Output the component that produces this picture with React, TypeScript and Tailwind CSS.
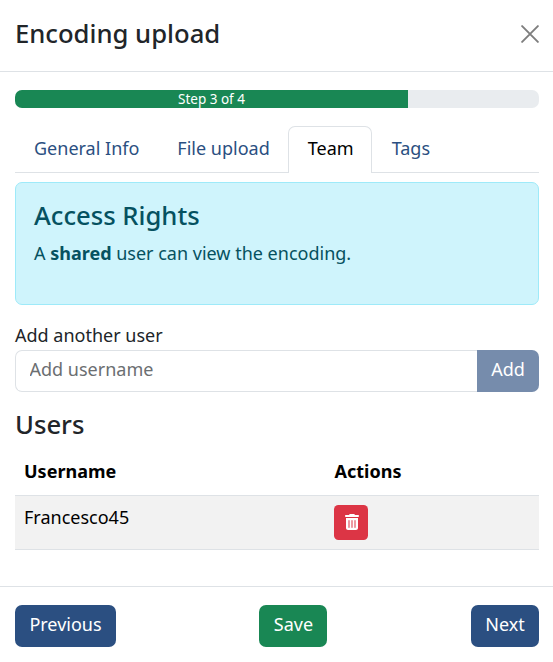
import React from "react";
import { FaTrashCan } from "react-icons/fa6";

const tabs = ["General Info", "File upload", "Team", "Tags"];

function Tab({ label, active }: { label: string; active: boolean }) {
  return (
    <button
      className={
        active
          ? "mr-px -mb-px -ml-px h-[47px] w-[84px] rounded-t-[7px] border border-b-0 border-[#dee2e6] bg-white pb-[3px] pl-[2px] text-black"
          : "h-[46px] px-[19px] pb-[2px] text-[#2b4f81]"
      }
    >
      {label}
    </button>
  );
}

export default function App() {
  return (
    <div className="h-[662px] w-[553px] overflow-hidden bg-white font-['Noto_Sans',sans-serif] text-[18px] leading-[27px] text-[#212529]">
      <header className="flex h-[72px] items-center justify-between border-b border-[#dee2e6] pr-[14px] pb-[3px] pl-[15px]">
        <h1 className="text-[25.65px] leading-[38px] font-medium">Encoding upload</h1>
        <button aria-label="Close" className="text-black opacity-50">
          <svg width="18" height="18" viewBox="0 0 16 16" fill="none" stroke="currentColor" strokeWidth="1.7" strokeLinecap="round">
            <path d="M1 1l14 14M15 1L1 15" />
          </svg>
        </button>
      </header>

      <main className="h-[515px] border-b border-[#dee2e6] pt-[18px] pr-[14px] pl-[15px]">
        <div className="flex h-[18px] overflow-hidden rounded-[7px] bg-[#e9ecef] text-[13.5px] leading-[18px]">
          <div className="w-3/4 bg-[#198754] text-center text-white">Step 3 of 4</div>
        </div>

        <nav className="mt-[18px] flex h-[47px] border-b border-[#dee2e6]">
          {tabs.map((label) => (
            <Tab key={label} label={label} active={label === "Team"} />
          ))}
        </nav>

        <section className="mt-[9px] h-[123px] rounded-[7px] border border-[#9eeaf9] bg-[#cff4fc] px-[18px] pt-[18px] text-[#055160]">
          <h2 className="text-[25.65px] leading-[30px] font-medium">Access Rights</h2>
          <p className="mt-[9px]">
            A <strong className="font-bold">shared</strong> user can view the encoding.
          </p>
        </section>

        <label htmlFor="username" className="mt-[17px] mb-px block">
          Add another user
        </label>
        <div className="flex h-[42px]">
          <input
            id="username"
            placeholder="Add username"
            className="min-w-0 flex-1 rounded-l-[7px] border border-r-0 border-[#dee2e6] px-[13.5px] pb-[4px] placeholder:text-[#6b6e71]"
          />
          <button className="w-[62px] rounded-r-[7px] bg-[#768cac] pb-[4px] text-white">Add</button>
        </div>

        <h2 className="mt-[18px] text-[25.65px] leading-[30px] font-medium">Users</h2>
        <table className="mt-[9px] w-full table-fixed border-collapse text-left text-black">
          <thead>
            <tr className="h-[46px] border-b border-[#dee2e6]">
              <th className="w-[310px] px-[9px] font-bold">Username</th>
              <th className="px-[9.5px] font-bold">Actions</th>
            </tr>
          </thead>
          <tbody>
            <tr className="h-[54px] border-b border-[#dee2e6] bg-[#f2f2f2]">
              <td className="px-[9px] pt-[8px] align-top">Francesco45</td>
              <td className="px-[9px] pt-[9px] align-top">
                <button aria-label="Delete user" className="flex h-[35px] w-[34px] items-center justify-center rounded-[4.5px] bg-[#dc3545] pl-px text-white">
                  <FaTrashCan size={16} />
                </button>
              </td>
            </tr>
          </tbody>
        </table>
      </main>

      <footer className="flex justify-between pt-[18px] pr-[14px] pl-[15px] text-white">
        <button className="h-[42px] w-[101px] rounded-[7px] bg-[#2b4f81] pb-[4px]">Previous</button>
        <button className="mr-px h-[42px] w-[68px] rounded-[7px] bg-[#198754] pb-[4px] pl-px">Save</button>
        <button className="h-[42px] w-[68px] rounded-[7px] bg-[#2b4f81] pb-[4px]">Next</button>
      </footer>
    </div>
  );
}
